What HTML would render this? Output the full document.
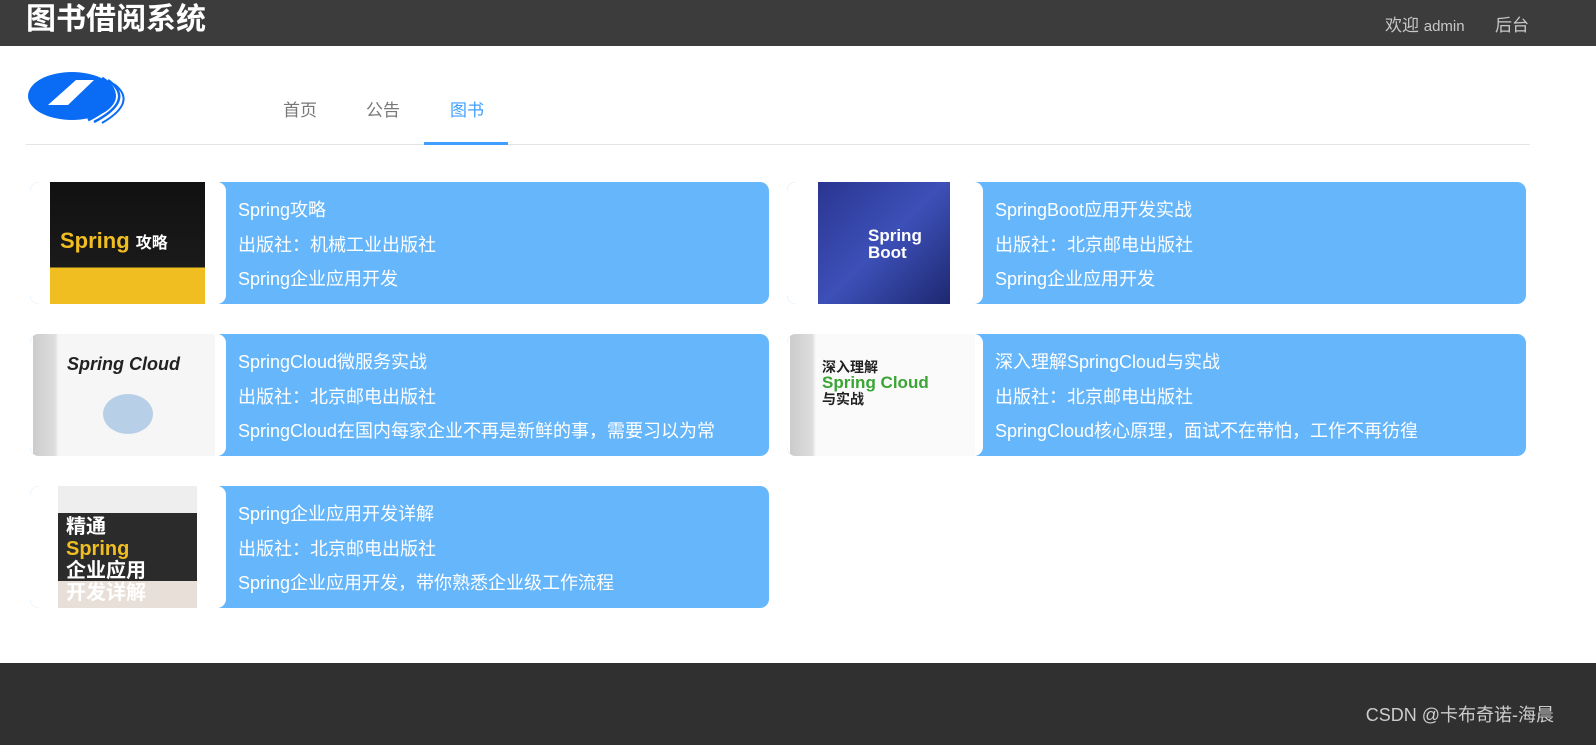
<!DOCTYPE html>
<html><head><meta charset="utf-8"><style>
*{margin:0;padding:0;box-sizing:border-box}
body{width:1596px;height:745px;overflow:hidden;background:#fff;font-family:"Liberation Sans","Noto Sans CJK SC",sans-serif;position:relative}
.top{position:absolute;left:0;top:0;width:1596px;height:46px;background:#3c3c3c}
.title{position:absolute;left:26px;top:1px;color:#fff;font-size:30px;font-weight:bold;line-height:38px}
.r{position:absolute;top:11px;color:#c8c8c8;font-size:17px}
.nav{position:absolute;top:96px;font-size:17px;color:#777}
.line{position:absolute;left:26px;top:144px;width:1504px;height:1px;background:#e4e4e4}
.act{position:absolute;left:424px;top:142px;width:84px;height:3px;background:#409eff}
.card{position:absolute;width:739px;height:122px;background:#66b6fc;border-radius:9px;overflow:hidden}
.card .w{position:absolute;left:0;top:0;width:196px;height:122px;background:#fff;border-radius:9px}
.card .t{position:absolute;left:208px;top:11px;color:#fff;font-size:18px;line-height:34.5px;white-space:nowrap}
.img{position:absolute;top:0;height:122px}
.foot{position:absolute;left:0;top:663px;width:1596px;height:82px;background:#303030}
</style></head><body>
<div class="top"><div class="title">图书借阅系统</div>
<div class="r" style="left:1385px">欢迎 <span style="font-size:15px">admin</span></div>
<div class="r" style="left:1495px">后台</div></div>
<svg style="position:absolute;left:28px;top:70px" width="104" height="55" viewBox="0 0 104 55">
<ellipse cx="44" cy="26" rx="44" ry="24" fill="#0a6cf5"/>
<polygon points="20,35 48,10 66,10 40,35" fill="#fff"/>
<path d="M74 8 Q104 28 60 50" stroke="#0a6cf5" stroke-width="3" fill="none"/>
<path d="M80 10 Q108 30 66 52" stroke="#0a6cf5" stroke-width="2.5" fill="none"/>
<path d="M86 14 Q110 32 74 53" stroke="#0a6cf5" stroke-width="2" fill="none"/>
</svg>
<div class="nav" style="left:283px">首页</div>
<div class="nav" style="left:366px">公告</div>
<div class="nav" style="left:450px;color:#409eff">图书</div>
<div class="line"></div><div class="act"></div>

<div class="card" style="left:30px;top:182px"><div class="w"></div>
<div class="img" style="left:20px;width:155px;background:linear-gradient(#111 0,#1a1a1a 70%,#f0be20 70%)"><div style="position:absolute;left:10px;top:46px;color:#f0be20;font-weight:bold;font-size:22px">Spring <span style="color:#fff;font-size:16px">攻略</span></div></div>
<div class="t">Spring攻略<br>出版社：机械工业出版社<br>Spring企业应用开发</div></div>

<div class="card" style="left:787px;top:182px"><div class="w"></div>
<div class="img" style="left:31px;width:132px;background:linear-gradient(135deg,#2a3590,#3d50b8 50%,#1e2870)"><div style="position:absolute;left:50px;top:45px;color:#fff;font-weight:bold;font-size:17px;line-height:17px">Spring<br>Boot</div></div>
<div class="t">SpringBoot应用开发实战<br>出版社：北京邮电出版社<br>Spring企业应用开发</div></div>

<div class="card" style="left:30px;top:334px"><div class="w"></div>
<div class="img" style="left:3px;width:182px;background:linear-gradient(90deg,#ccc 0,#ddd 12%,#f6f6f6 14%)"><div style="position:absolute;left:34px;top:20px;color:#222;font-weight:bold;font-style:italic;font-size:18px">Spring Cloud</div><div style="position:absolute;left:70px;top:60px;width:50px;height:40px;border-radius:50%;background:#7aa9d8;opacity:.5"></div></div>
<div class="t">SpringCloud微服务实战<br>出版社：北京邮电出版社<br>SpringCloud在国内每家企业不再是新鲜的事，需要习以为常</div></div>

<div class="card" style="left:787px;top:334px"><div class="w"></div>
<div class="img" style="left:3px;width:185px;background:linear-gradient(90deg,#ccc 0,#ddd 12%,#fafafa 14%)"><div style="position:absolute;left:32px;top:25px;color:#222;font-weight:bold;font-size:14px;line-height:16px">深入理解<br><span style="color:#3aa534;font-size:17px">Spring Cloud</span><br>与实战</div></div>
<div class="t">深入理解SpringCloud与实战<br>出版社：北京邮电出版社<br>SpringCloud核心原理，面试不在带怕，工作不再彷徨</div></div>

<div class="card" style="left:30px;top:486px"><div class="w"></div>
<div class="img" style="left:28px;width:139px;background:linear-gradient(#eee 0,#eee 22%,#2b2b2b 22%,#2b2b2b 78%,#e8e0d8 78%)"><div style="position:absolute;left:8px;top:30px;color:#fff;font-weight:bold;font-size:20px;line-height:22px">精通<br><span style="color:#f0be20">Spring</span><br>企业应用<br>开发详解</div></div>
<div class="t">Spring企业应用开发详解<br>出版社：北京邮电出版社<br>Spring企业应用开发，带你熟悉企业级工作流程</div></div>

<div class="foot"><div style="position:absolute;right:42px;top:38px;color:#ccc;font-size:18px">CSDN @卡布奇诺-海晨</div></div>
</body></html>
